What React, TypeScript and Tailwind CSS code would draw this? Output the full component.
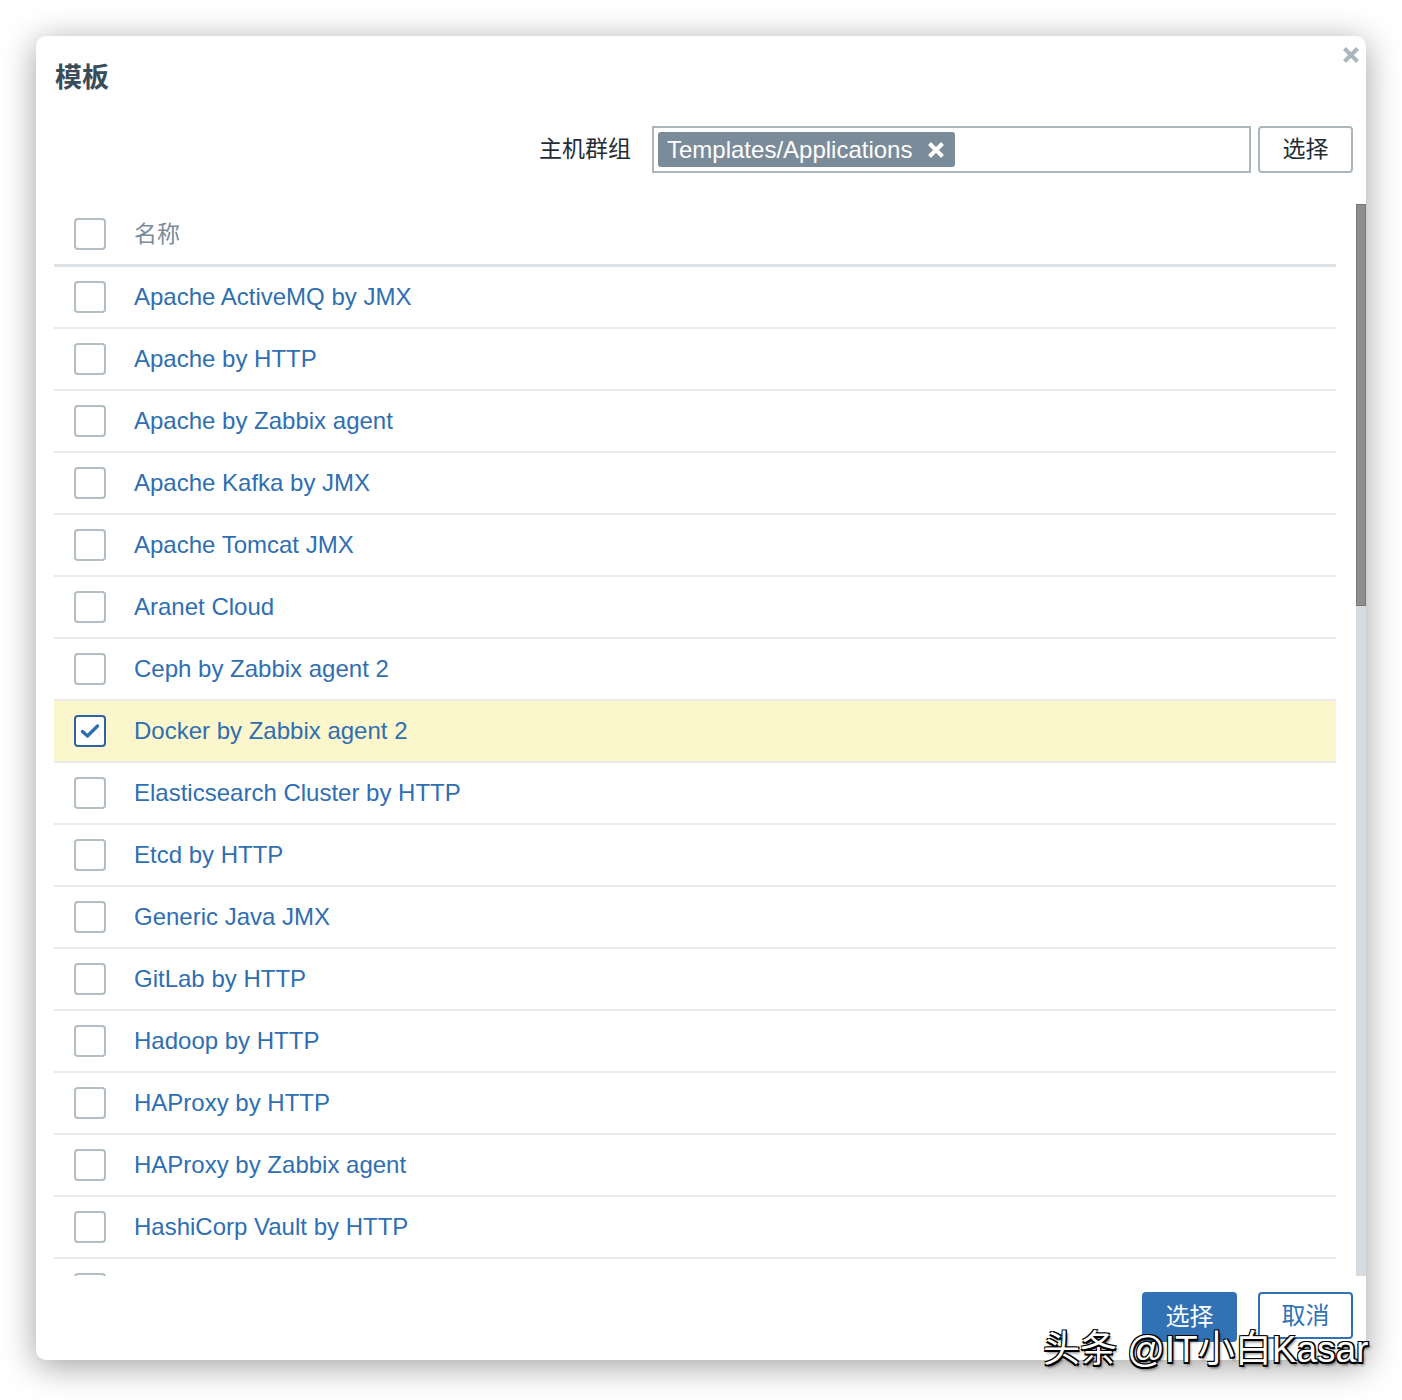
import React from "react";

const templates = [
  "Apache ActiveMQ by JMX",
  "Apache by HTTP",
  "Apache by Zabbix agent",
  "Apache Kafka by JMX",
  "Apache Tomcat JMX",
  "Aranet Cloud",
  "Ceph by Zabbix agent 2",
  "Docker by Zabbix agent 2",
  "Elasticsearch Cluster by HTTP",
  "Etcd by HTTP",
  "Generic Java JMX",
  "GitLab by HTTP",
  "Hadoop by HTTP",
  "HAProxy by HTTP",
  "HAProxy by Zabbix agent",
  "HashiCorp Vault by HTTP",
  "",
];

const font = "font-['Liberation_Sans','Noto_Sans_CJK_SC',sans-serif]";

function Checkbox({ checked }: { checked?: boolean }) {
  return (
    <div
      className={`w-[32px] h-[32px] shrink-0 rounded-[4px] border-2 bg-white flex items-center justify-center ${
        checked ? "border-[#2d64a0]" : "border-[#b3bdc4]"
      }`}
    >
      {checked && (
        <svg width="20" height="16" viewBox="0 0 20 16">
          <path d="M2.5 8.5 L7.5 13 L17.5 3" fill="none" stroke="#2f6fb1" strokeWidth="3.4" strokeLinecap="round" strokeLinejoin="round" />
        </svg>
      )}
    </div>
  );
}

export default function App() {
  return (
    <div className={`relative w-[1402px] h-[1400px] bg-white ${font}`}>
      <div className="absolute left-[36px] top-[36px] w-[1330px] h-[1324px] bg-white rounded-[10px] overflow-hidden shadow-[0_6px_34px_rgba(0,0,0,0.38)] flex flex-col">
        <button className="absolute right-[5px] top-[9px] w-[20px] h-[20px] flex items-center justify-center">
          <svg width="18" height="18" viewBox="0 0 18 18">
            <path d="M2.5 2.5 L15.5 15.5 M15.5 2.5 L2.5 15.5" stroke="#acb6bd" strokeWidth="4.2" strokeLinecap="butt" />
          </svg>
        </button>

        <div className="pl-[19px] pt-[24px]">
          <h2 className="text-[27px] leading-[36px] font-bold text-[#394c59]">模板</h2>
        </div>

        <div className="mt-[30px] h-[47px] flex items-center justify-end pr-[13px]">
          <span className="text-[23px] text-[#1f2c33] mr-[21px]">主机群组</span>
          <div className="w-[599px] h-[47px] border-2 border-[#acb6bd] flex items-center pl-[4px]">
            <span className="h-[35px] rounded-[3px] bg-[#7a8b99] text-white text-[24px] flex items-center pl-[9px] pr-[9px] gap-[14px]">
              Templates/Applications
              <svg width="20" height="20" viewBox="0 0 20 20">
                <path d="M3.5 3.5 L16.5 16.5 M16.5 3.5 L3.5 16.5" stroke="white" strokeWidth="4" />
              </svg>
            </span>
          </div>
          <button className="ml-[7px] w-[95px] h-[47px] border-2 border-[#acb6bd] rounded-[4px] text-[23px] text-[#1f2c33] bg-white">
            选择
          </button>
        </div>

        <div className="mt-[31px] h-[1072px] flex">
          <div className="flex-1 pl-[18px] pr-[20px] overflow-hidden">
            <div className="h-[63px] border-b-[3px] border-[#dde3e6] flex items-center pl-[20px] gap-[28px]">
              <Checkbox />
              <span className="text-[23px] text-[#7a8b99]">名称</span>
            </div>
            {templates.map((t, i) => {
              const sel = t === "Docker by Zabbix agent 2";
              return (
                <div
                  key={i}
                  className={`h-[62px] border-b-2 border-[#ebebeb] flex items-center pl-[20px] gap-[28px] ${
                    sel ? "bg-[#fbf6cb]" : ""
                  }`}
                >
                  <Checkbox checked={sel} />
                  <span className="text-[24px] text-[#2f6fb1]">{t}</span>
                </div>
              );
            })}
          </div>
          <div className="w-[10px] h-full bg-[#d6dbdf] flex flex-col">
            <div className="h-[402px] bg-[#8e8e8e] border border-[#777]" />
          </div>
        </div>

        <div className="mt-[16px] flex justify-end gap-[21px] pr-[13px]">
          <button className="w-[95px] h-[50px] rounded-[4px] bg-[#3072b4] text-white text-[24px]">选择</button>
          <button className="w-[95px] h-[47px] rounded-[4px] border-2 border-[#3072b4] bg-white text-[#3072b4] text-[24px]">
            取消
          </button>
        </div>
      </div>

      <div className="absolute left-[1043px] top-[1327px] text-[37px] leading-[46px] text-white whitespace-nowrap [text-shadow:1.5px_1.5px_0_#000,-1px_-1px_0_#000,1.5px_-1px_0_#000,-1px_1.5px_0_#000,2px_3px_3px_rgba(0,0,0,0.6)]">
        头条 @IT小白Kasar
      </div>
    </div>
  );
}
